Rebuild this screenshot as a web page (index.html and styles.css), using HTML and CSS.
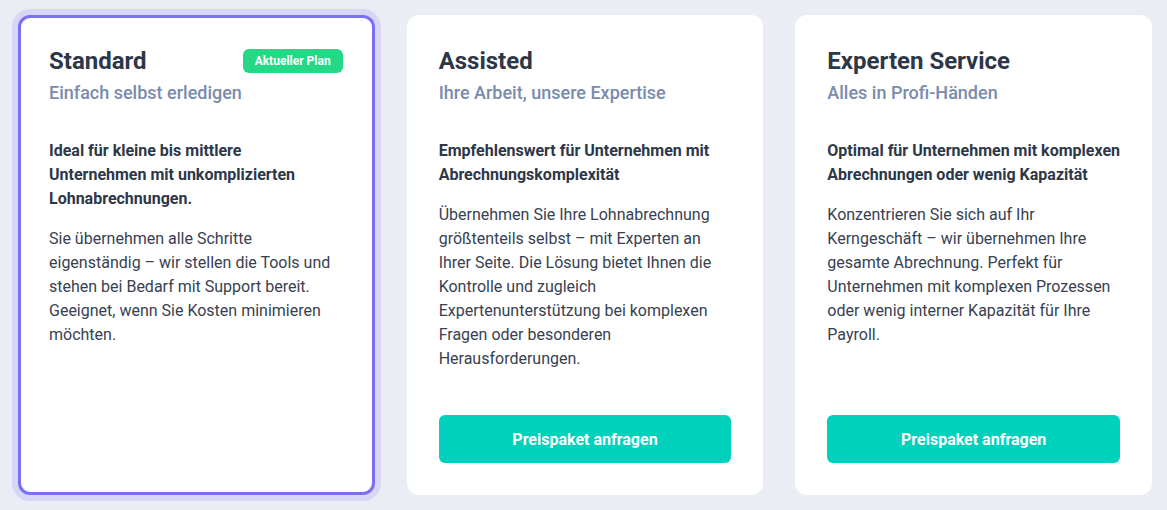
FILE: index.html
```html
<!DOCTYPE html>
<html lang="de">
<head>
    <meta charset="UTF-8">
    <meta name="viewport" content="width=device-width, initial-scale=1.0">
    <title>Preispakete</title>
    <link rel="stylesheet" href="styles.css">
</head>
<body>
    <div class="plans">
        <div class="plan-card current">
            <div class="plan-head">
                <h2>Standard</h2>
                <span class="badge">Aktueller Plan</span>
            </div>
            <div class="plan-sub">Einfach selbst erledigen</div>
            <p class="plan-lead">Ideal für kleine bis mittlere Unternehmen mit unkomplizierten Lohnabrechnungen.</p>
            <p class="plan-text">Sie übernehmen alle Schritte eigenständig – wir stellen die Tools und stehen bei Bedarf mit Support bereit. Geeignet, wenn Sie Kosten minimieren möchten.</p>
        </div>

        <div class="plan-card">
            <div class="plan-head">
                <h2>Assisted</h2>
            </div>
            <div class="plan-sub">Ihre Arbeit, unsere Expertise</div>
            <p class="plan-lead">Empfehlenswert für Unternehmen mit Abrechnungskomplexität</p>
            <p class="plan-text">Übernehmen Sie Ihre Lohnabrechnung größtenteils selbst – mit Experten an Ihrer Seite. Die Lösung bietet Ihnen die Kontrolle und zugleich Expertenunterstützung bei komplexen Fragen oder besonderen Herausforderungen.</p>
            <button class="plan-btn">Preispaket anfragen</button>
        </div>

        <div class="plan-card">
            <div class="plan-head">
                <h2>Experten Service</h2>
            </div>
            <div class="plan-sub">Alles in Profi-Händen</div>
            <p class="plan-lead">Optimal für Unternehmen mit komplexen Abrechnungen oder wenig Kapazität</p>
            <p class="plan-text">Konzentrieren Sie sich auf Ihr Kerngeschäft – wir übernehmen Ihre gesamte Abrechnung. Perfekt für Unternehmen mit komplexen Prozessen oder wenig interner Kapazität für Ihre Payroll.</p>
            <button class="plan-btn">Preispaket anfragen</button>
        </div>
    </div>
</body>
</html>
```

FILE: styles.css
```css
body {
    margin: 0;
    background-color: #ebedf5;
    font-family: Roboto, "Liberation Sans", sans-serif;
    color: #2d3748;
}
.plans {
    display: grid;
    grid-template-columns: repeat(3, 1fr);
    gap: 32px;
    padding: 15px 15px 15px 18px;
}
.plan-card {
    display: flex;
    flex-direction: column;
    height: 480px;
    box-sizing: border-box;
    padding: 32px;
    background-color: white;
    border-radius: 12px;
}
.plan-card.current {
    border: 3px solid #7a70f4;
    padding: 29px 32px 29px 28px;
    box-shadow: 0 0 0 6px #d7d6f6;
}
.plan-head {
    display: flex;
    justify-content: space-between;
    align-items: center;
    height: 28px;
}
.plan-head h2 {
    margin: 0;
    font-size: 24px;
    line-height: 28px;
    font-weight: 700;
    color: #2d3748;
}
.badge {
    background-color: #24d885;
    color: white;
    font-size: 12px;
    font-weight: 700;
    line-height: 24px;
    padding: 0 12px;
    border-radius: 6px;
    margin-right: -3px;
}
.plan-sub {
    margin-top: 6px;
    font-size: 18px;
    line-height: 24px;
    font-weight: 500;
    color: #7a8bac;
}
.plan-lead {
    margin: 34px 0 0;
    font-size: 16px;
    line-height: 24px;
    font-weight: 700;
}
.plan-text {
    margin: 16px 0 0;
    font-size: 16px;
    line-height: 24px;
    color: #374151;
}
.plan-btn {
    margin-top: auto;
    height: 48px;
    border: none;
    border-radius: 6px;
    background-color: #00d1bd;
    color: white;
    font-family: inherit;
    font-size: 16px;
    font-weight: 700;
}
```
